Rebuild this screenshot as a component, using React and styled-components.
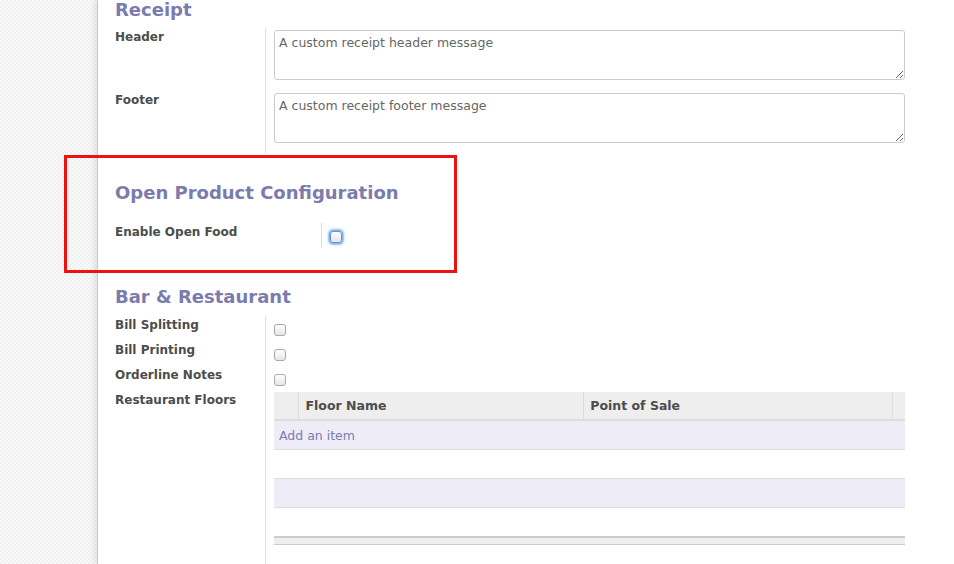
import React from 'react';
import styled, { createGlobalStyle } from 'styled-components';

const GlobalStyle = createGlobalStyle`
    html, body {
        margin: 0;
        padding: 0;
        height: 100%;
        overflow: hidden;
    }
    body {
        font-family: "DejaVu Sans", "Liberation Sans", sans-serif;
        font-size: 12px;
        color: #4c4c4c;
    }
`;

const Page = styled.div`
    display: flex;
    height: 564px;
    width: 954px;
    overflow: hidden;
    background-color: #fafafa;
    background-image:
        linear-gradient(45deg, #f0f0f0 25%, transparent 25%, transparent 75%, #f0f0f0 75%),
        linear-gradient(45deg, #f0f0f0 25%, transparent 25%, transparent 75%, #f0f0f0 75%);
    background-size: 4px 4px;
    background-position: 0 0, 2px 2px;
`;

const Gutter = styled.div`
    width: 97px;
    flex: none;
`;

const Sheet = styled.div`
    flex: 1;
    background: #fff;
    border-left: 1px solid #c9c8d6;
    box-shadow: -3px 0 5px rgba(0, 0, 0, 0.08);
    padding: 0 49px 0 17px;
    position: relative;
`;

const Content = styled.div`
    margin-top: -2px;
`;

const Heading = styled.h2`
    margin: ${(p) => p.$top || 0}px 0 0;
    font-size: 18px;
    line-height: 24px;
    font-weight: bold;
    color: #7c7bad;
`;

const Rows = styled.div`
    display: grid;
    grid-template-columns: ${(p) => p.$label}px 1fr;
    margin-top: ${(p) => p.$top || 0}px;
`;

const Label = styled.div`
    font-weight: bold;
    line-height: 18px;
    color: #4c4c4c;
    padding-bottom: ${(p) => p.$pad || 0}px;
`;

const Field = styled.div`
    border-left: 1px solid #ddd;
    padding: ${(p) => p.$pad || '0'};
    padding-left: 8px;
    min-height: ${(p) => p.$h || 0}px;
    box-sizing: border-box;
`;

const TextArea = styled.textarea`
    display: block;
    width: 100%;
    height: 50px;
    box-sizing: border-box;
    border: 1px solid #ccc;
    border-radius: 3px;
    padding: 3px 4px 4px;
    font-family: inherit;
    font-size: 12.5px;
    line-height: 18px;
    color: #666;
    &::placeholder {
        color: #666;
    }
`;

const Check = styled.input.attrs({ type: 'checkbox' })`
    appearance: none;
    display: block;
    margin: ${(p) => p.$top || 8}px 0 0;
    width: 12px;
    height: 12px;
    box-sizing: border-box;
    border: 1px solid ${(p) => (p.$focus ? '#5c93d8' : '#a9a9a9')};
    border-radius: 3px;
    background: linear-gradient(#ffffff, #e6e6e6);
    box-shadow: ${(p) => (p.$focus ? '0 0 0 1.5px #8fb6ea, 0 0 3px 2px rgba(110, 160, 230, 0.5)' : 'none')};
`;

const Highlight = styled.div`
    position: relative;
    &::after {
        content: '';
        position: absolute;
        left: -51px;
        top: -26px;
        width: 393px;
        height: 118px;
        box-sizing: border-box;
        border: 3px solid #ee1111;
        pointer-events: none;
    }
`;

const Table = styled.table`
    width: 100%;
    border-collapse: collapse;
    margin-top: 1px;
    font-size: 12.5px;
`;

const Th = styled.th`
    height: 28px;
    padding: 0 6px;
    text-align: left;
    font-weight: bold;
    color: #4c4c4c;
    background: #eee;
    border-right: ${(p) => (p.$last ? 'none' : '1px solid #ddd')};
    border-bottom: 2px solid #ddd;
    width: ${(p) => (p.$w ? `${p.$w}px` : 'auto')};
    box-sizing: border-box;
`;

const Tr = styled.tr`
    background: ${(p) => (p.$odd ? '#eeedf7' : '#fff')};
    border-bottom: 1px solid #ddd;
`;

const Td = styled.td`
    height: 28px;
    padding: 0 5px;
    color: #7c7bad;
`;

const FootRow = styled.tr`
    td {
        height: 6px;
        padding: 0;
        background: #eee;
        border-top: 2px solid #ccc;
        border-bottom: 1px solid #ccc;
    }
`;

export default function App() {
    return (
        <Page>
            <GlobalStyle />
            <Gutter />
            <Sheet>
                <Content>
                    <Heading>Receipt</Heading>
                    <Rows $label={150} $top={6}>
                        <Label>Header</Label>
                        <Field $pad="2px 0 11px">
                            <TextArea placeholder="A custom receipt header message" />
                        </Field>
                        <Label>Footer</Label>
                        <Field $pad="2px 0 11px">
                            <TextArea placeholder="A custom receipt footer message" />
                        </Field>
                    </Rows>

                    <Highlight>
                        <Heading $top={27}>Open Product Configuration</Heading>
                        <Rows $label={206} $top={18}>
                            <Label>Enable Open Food</Label>
                            <Field $h={25}>
                                <Check $top={8} $focus />
                            </Field>
                        </Rows>
                    </Highlight>

                    <Heading $top={37}>Bar &amp; Restaurant</Heading>
                    <Rows $label={150} $top={7}>
                        <Label $pad={7}>Bill Splitting</Label>
                        <Field $h={25}><Check /></Field>
                        <Label $pad={7}>Bill Printing</Label>
                        <Field $h={25}><Check /></Field>
                        <Label $pad={7}>Orderline Notes</Label>
                        <Field $h={25}><Check /></Field>
                        <Label>Restaurant Floors</Label>
                        <Field $h={180}>
                            <Table>
                                <thead>
                                    <tr>
                                        <Th $w={25} />
                                        <Th $w={285}>Floor Name</Th>
                                        <Th $w={309}>Point of Sale</Th>
                                        <Th $last />
                                    </tr>
                                </thead>
                                <tbody>
                                    <Tr $odd>
                                        <Td colSpan={4}>Add an item</Td>
                                    </Tr>
                                    <Tr><Td colSpan={4} /></Tr>
                                    <Tr $odd><Td colSpan={4} /></Tr>
                                    <Tr><Td colSpan={4} /></Tr>
                                </tbody>
                                <tfoot>
                                    <FootRow><td colSpan={4} /></FootRow>
                                </tfoot>
                            </Table>
                        </Field>
                    </Rows>
                </Content>
            </Sheet>
        </Page>
    );
}
